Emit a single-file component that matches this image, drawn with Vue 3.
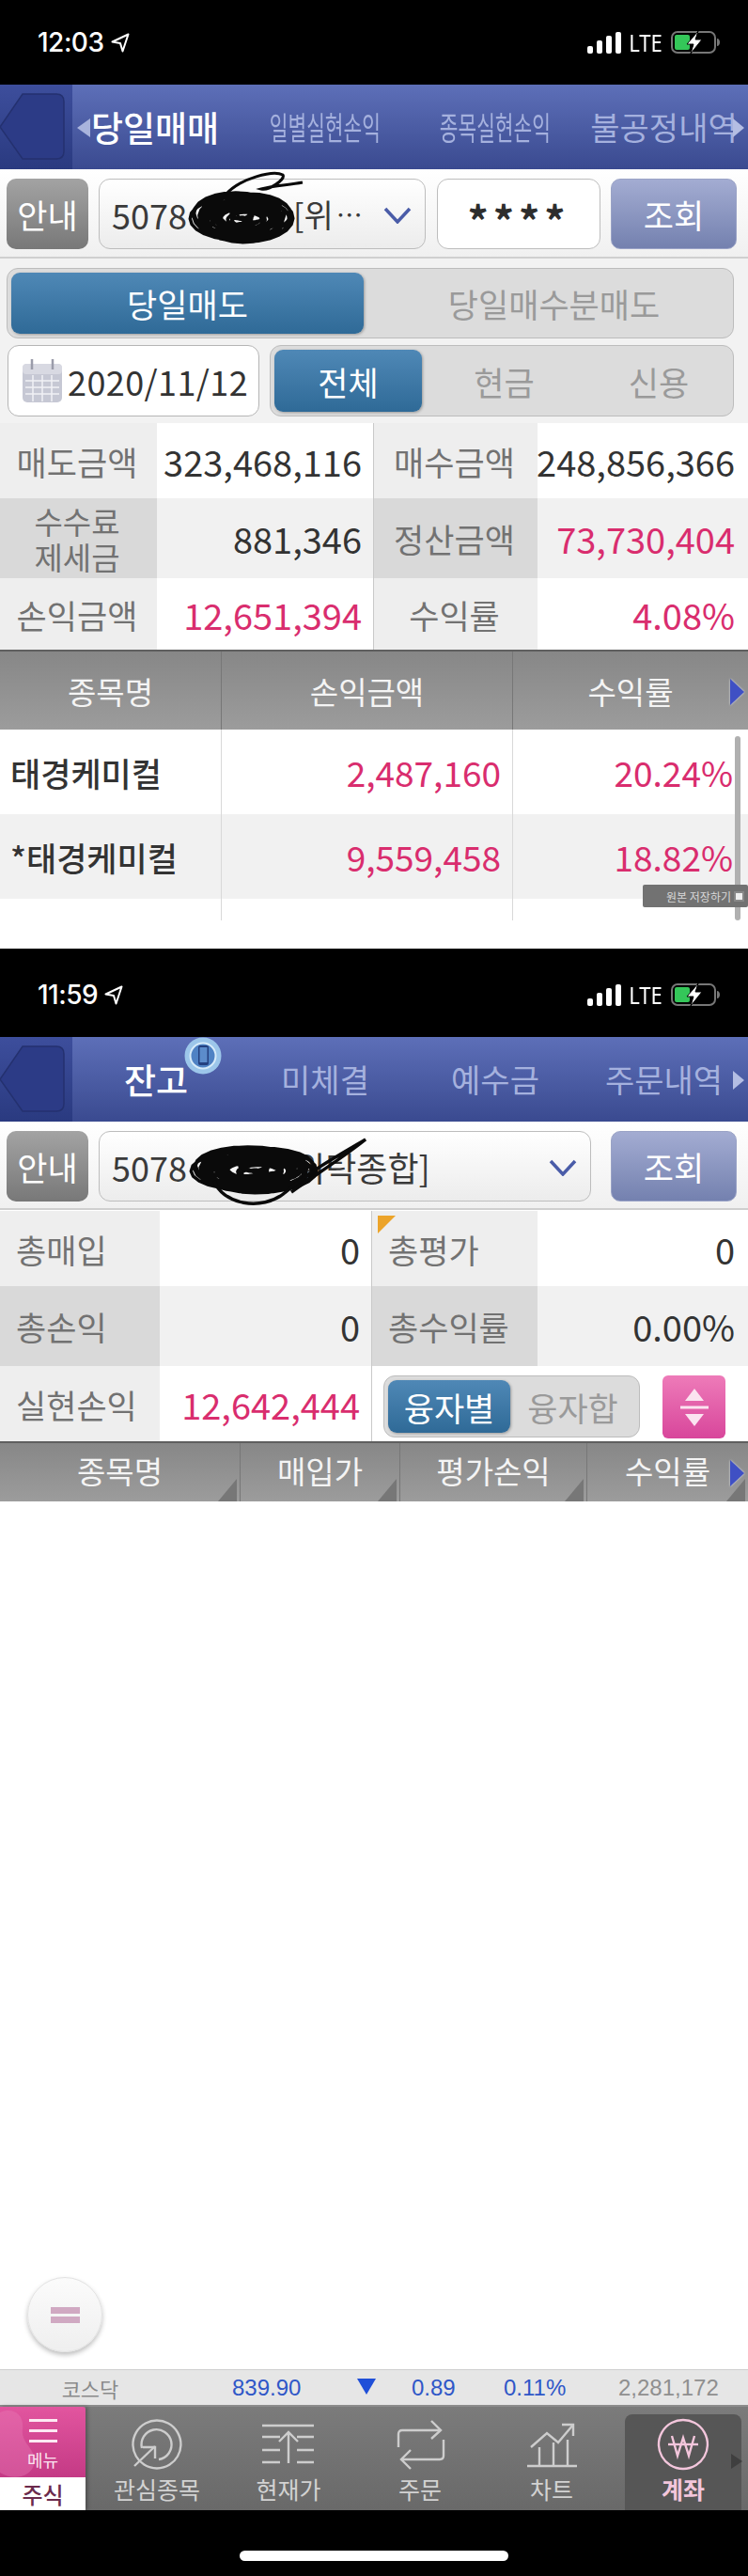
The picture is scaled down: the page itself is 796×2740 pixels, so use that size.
<template>
  <div class="page">
    <!-- first capture: 당일매매 -->
    <div class="status">
      <span class="time">12:03</span>
      <svg class="loc" width="20" height="21" viewBox="0 0 20 21"><path d="M18.5 1.5 1.5 9.5 10 11 12.5 19.5Z" fill="none" stroke="#fff" stroke-width="2" stroke-linejoin="round" /></svg>
      <div class="status-right">
        <div class="signal"><i class="b1"></i><i class="b2"></i><i class="b3"></i><i class="b4"></i></div>
        <span class="lte">LTE</span>
        <svg width="52" height="24" viewBox="0 0 52 24"><rect x="1" y="1" width="46" height="22" rx="6" fill="none" stroke="#777" stroke-width="2" /><rect x="4" y="4" width="16" height="16" rx="2" fill="#34c759" /><path d="M49 8v8c2 0 3-2 3-4s-1-4-3-4Z" fill="#777" /><path d="M29 0 17 14h7l-3 10 12-15h-7z" fill="#fff" stroke="#000" stroke-width="1" /></svg>
      </div>
    </div>

    <div class="head head-a">
      <div class="back">
        <svg width="70" height="72" viewBox="0 0 70 72"><path d="M24 1H60Q68 1 68 9V62Q68 70 60 70H24L0 36Z" fill="#2c3b86" stroke="#24316f" stroke-width="1.5" /></svg>
      </div>
      <span class="arrow-l"></span>
      <div v-for="t in tabsA" :key="t.label" class="tab">
        <span :class="['tab-text', { on: t.on, squeeze: t.squeeze }]">{{ t.label }}</span>
      </div>
      <span class="arrow-r"></span>
    </div>

    <div class="tools">
      <button class="btn guide">안내</button>
      <div class="select short">
        <span>5078</span><span class="hidden-no first"></span><span class="acct small">[위</span><span class="dots">…</span>
        <svg class="chev" width="30" height="18" viewBox="0 0 30 18"><path d="M2 2 15 16 28 2" fill="none" stroke="#4a5ca8" stroke-width="3.5" /></svg>
        <svg class="scribble" width="240" height="110" viewBox="0 0 240 110">
          <path :d="scribbleA" fill="none" stroke="#0a0a0a" stroke-width="3.5" stroke-linejoin="round" />
          <path d="M134 26C150 8 185 0 195 5 198 10 180 22 172 20 186 16 200 16 216 13" fill="none" stroke="#0a0a0a" stroke-width="3" />
        </svg>
      </div>
      <div class="pw">****</div>
      <button class="btn query">조회</button>
    </div>

    <div class="filters">
      <div class="seg seg-wide">
        <div class="seg-item on">당일매도</div>
        <div class="seg-item">당일매수분매도</div>
      </div>
      <div class="filter-row">
        <div class="date">
          <svg width="44" height="48" viewBox="0 0 44 48">
            <rect x="1" y="6" width="42" height="41" rx="5" fill="#c6c8d4" />
            <rect x="1" y="6" width="42" height="11" rx="4" fill="#d8d9e2" />
            <path d="M4 24H40M4 31H40M4 38H40M12 18V46M22 18V46M32 18V46" stroke="#f1f1f5" stroke-width="1.5" />
            <path d="M11 1V12M33 1V12" stroke="#9a9caa" stroke-width="2.5" />
          </svg>
          <span>2020/11/12</span>
        </div>
        <div class="seg seg-type">
          <div class="seg-item on">전체</div>
          <div class="seg-item">현금</div>
          <div class="seg-item">신용</div>
        </div>
      </div>
    </div>

    <div v-for="(r, i) in summaryA" :key="i" :class="['sum', 'sum-a', 'r' + i]">
      <div class="lab">
        <template v-if="r.l1 === '수수료 제세금'"><span class="two">수수료<br />제세금</span></template>
        <template v-else>{{ r.l1 }}</template>
      </div>
      <div :class="['val', { red: r.red1 }]">{{ r.v1 }}</div>
      <div class="lab split">{{ r.l2 }}</div>
      <div :class="['val', 'far', { red: r.red2 }]">{{ r.v2 }}</div>
    </div>

    <div class="grid-head cols-a">
      <div>종목명</div>
      <div>손익금액</div>
      <div>수익률</div>
      <span class="more"></span>
    </div>
    <div class="grid-body">
      <div v-for="(s, i) in stocks" :key="s.name" :class="['stock', 'cols-a', { alt: i === 1 }]">
        <div class="name">{{ s.name }}</div>
        <div class="num">{{ s.amount }}</div>
        <div class="num">{{ s.rate }}</div>
      </div>
      <div class="stock cols-a filler"><div></div><div></div><div></div></div>
      <div class="scroll"></div>
      <div class="save">원본 저장하기 <i></i></div>
    </div>
    <div class="gap"></div>

    <!-- second capture: 잔고 -->
    <div class="status second">
      <span class="time">11:59</span>
      <svg class="loc" width="20" height="21" viewBox="0 0 20 21"><path d="M18.5 1.5 1.5 9.5 10 11 12.5 19.5Z" fill="none" stroke="#fff" stroke-width="2" stroke-linejoin="round" /></svg>
      <div class="status-right">
        <div class="signal"><i class="b1"></i><i class="b2"></i><i class="b3"></i><i class="b4"></i></div>
        <span class="lte">LTE</span>
        <svg width="52" height="24" viewBox="0 0 52 24"><rect x="1" y="1" width="46" height="22" rx="6" fill="none" stroke="#777" stroke-width="2" /><rect x="4" y="4" width="16" height="16" rx="2" fill="#34c759" /><path d="M49 8v8c2 0 3-2 3-4s-1-4-3-4Z" fill="#777" /><path d="M29 0 17 14h7l-3 10 12-15h-7z" fill="#fff" stroke="#000" stroke-width="1" /></svg>
      </div>
    </div>

    <div class="head">
      <div class="back">
        <svg width="70" height="72" viewBox="0 0 70 72"><path d="M24 1H60Q68 1 68 9V62Q68 70 60 70H24L0 36Z" fill="#2c3b86" stroke="#24316f" stroke-width="1.5" /></svg>
      </div>
      <div v-for="t in tabsB" :key="t.label" class="tab">
        <span :class="['tab-text', { on: t.on }]">{{ t.label }}</span>
      </div>
      <span class="arrow-r small"></span>
      <svg class="badge" width="40" height="40" viewBox="0 0 40 40">
        <circle cx="20" cy="20" r="19.5" fill="#9cc6ea" />
        <circle cx="20" cy="20" r="13.5" fill="#4f82c4" stroke="#d7ebf9" stroke-width="2" />
        <rect x="15" y="9" width="11" height="21" rx="2" fill="#24407f" />
        <rect x="16.5" y="11" width="8" height="16" fill="#5c8ccb" />
      </svg>
    </div>

    <div class="tools tall">
      <button class="btn guide">안내</button>
      <div class="select long">
        <span>5078</span><span class="hidden-no"></span><span class="acct">[위탁종합]</span>
        <svg class="chev" width="30" height="18" viewBox="0 0 30 18"><path d="M2 2 15 16 28 2" fill="none" stroke="#4a5ca8" stroke-width="3.5" /></svg>
        <svg class="scribble" width="300" height="110" viewBox="0 0 300 110">
          <path :d="scribbleB" fill="none" stroke="#0a0a0a" stroke-width="3.5" stroke-linejoin="round" />
          <path d="M122 62C130 86 172 96 198 74 226 50 256 34 283 18 258 38 226 58 204 74" fill="none" stroke="#0a0a0a" stroke-width="3.5" />
        </svg>
      </div>
      <button class="btn query">조회</button>
    </div>

    <div v-for="(r, i) in summaryB" :key="'b' + i" :class="['sum', 'sum-b', 'r' + i]">
      <div class="lab left">{{ r.l1 }}</div>
      <div :class="['val', { red: r.red1 }]">{{ r.v1 }}</div>
      <template v-if="r.l2">
        <div class="lab left split">{{ r.l2 }}<span v-if="i === 0" class="flag"></span></div>
        <div class="val far">{{ r.v2 }}</div>
      </template>
      <div v-else class="controls split">
        <div class="seg seg-loan">
          <div class="seg-item on">융자별</div>
          <div class="seg-item">융자합</div>
        </div>
        <div class="pink">
          <svg width="30" height="42" viewBox="0 0 30 42"><path d="M15 1 25 14H5ZM15 41 5 28H25Z" fill="#fbe3f0" /><rect x="0" y="19.5" width="30" height="3" fill="#fbe3f0" /></svg>
        </div>
      </div>
    </div>

    <div class="grid-head cols-b">
      <div v-for="h in headB" :key="h" class="sortable">{{ h }}</div>
      <span class="more"></span>
    </div>

    <div class="empty">
      <div class="fab"><i></i><i></i></div>
    </div>

    <div class="ticker">
      <span class="t-name">코스닥</span>
      <span class="t-price">839.90</span>
      <span class="t-down"></span>
      <span class="t-diff">0.89</span>
      <span class="t-rate">0.11%</span>
      <span class="t-vol">2,281,172</span>
    </div>

    <div class="nav">
      <div class="menu">
        <div class="menu-top">
          <svg class="blob" width="91" height="77" viewBox="0 0 91 77"><path d="M0 6C14 0 26 8 24 24 22 40 40 44 36 62 32 76 12 78 0 70Z" fill="#e87ab6" opacity=".4" /></svg>
          <div class="burger"><i></i><i></i><i></i></div>
          <span>메뉴</span>
        </div>
        <div class="menu-sub">주식</div>
      </div>
      <div class="nav-items">
        <div v-for="item in navItems" :key="item.label" :class="['nav-item', { active: item.active }]">
          <svg width="60" height="60" viewBox="0 0 60 60" fill="none" :stroke="item.active ? '#f3c6dc' : '#cdcdcd'" stroke-width="2.4">
            <path v-for="d in item.paths" :key="d" :d="d" />
          </svg>
          <span>{{ item.label }}</span>
        </div>
      </div>
      <span class="nav-more"></span>
    </div>

    <div class="home"><i></i></div>
  </div>
</template>

<script setup>
const tabsA = [
  { label: '당일매매', on: true },
  { label: '일별실현손익', squeeze: true },
  { label: '종목실현손익', squeeze: true },
  { label: '불공정내역' }
]

const tabsB = [
  { label: '잔고', on: true },
  { label: '미체결' },
  { label: '예수금' },
  { label: '주문내역' }
]

const summaryA = [
  { l1: '매도금액', v1: '323,468,116', l2: '매수금액', v2: '248,856,366' },
  { l1: '수수료 제세금', v1: '881,346', l2: '정산금액', v2: '73,730,404', red2: true },
  { l1: '손익금액', v1: '12,651,394', red1: true, l2: '수익률', v2: '4.08%', red2: true }
]

const summaryB = [
  { l1: '총매입', v1: '0', l2: '총평가', v2: '0' },
  { l1: '총손익', v1: '0', l2: '총수익률', v2: '0.00%' },
  { l1: '실현손익', v1: '12,642,444', red1: true }
]

const stocks = [
  { name: '태경케미컬', amount: '2,487,160', rate: '20.24%' },
  { name: '*태경케미컬', amount: '9,559,458', rate: '18.82%' }
]

const headB = ['종목명', '매입가', '평가손익', '수익률']

const navItems = [
  {
    label: '관심종목',
    paths: [
      'M30 4.5A25.5 25.5 0 1 1 29.9 4.5Z',
      'M14 34A16 16 0 1 1 32 46',
      'M6 53 28 32',
      'M15 33H28V45'
    ]
  },
  {
    label: '현재가',
    paths: [
      'M2 10H57',
      'M2 22H21M2 36H21M2 49H21',
      'M39 22H57M39 36H57M39 49H57',
      'M30 50V17M20 27 30 17 40 27'
    ]
  },
  {
    label: '주문',
    paths: [
      'M7 33V19Q7 15 11 15H52',
      'M42 5 52 15 42 24',
      'M55 25V42Q55 46 51 46H10',
      'M20 36 10 46 20 56'
    ]
  },
  {
    label: '차트',
    paths: [
      'M4 53H57',
      'M17 53V33M32 53V28M47 53V25',
      'M8 33 25 18 37 28 53 9',
      'M41 9H53V21'
    ]
  },
  {
    label: '계좌',
    active: true,
    paths: [
      'M30 4A26 26 0 1 1 29.9 4Z',
      'M18 21 24 42 30 23 36 42 42 21',
      'M14 30H46'
    ]
  }
]

// the hand-drawn blot over the account number
function makeScribble(cx, cy, rx, ry, turns) {
  let d = ''
  for (let i = 0; i <= turns * 24; i++) {
    const a = (i / 24) * Math.PI * 2
    const k = 0.12 + 0.88 * Math.abs(Math.sin(i * 0.023))
    const dx = Math.sin(i * 0.11) * 7
    const dy = Math.cos(i * 0.07) * 4
    const x = cx + Math.cos(a) * rx * k + dx
    const y = cy + Math.sin(a) * ry * k + dy
    d += (i ? 'L' : 'M') + x.toFixed(1) + ' ' + y.toFixed(1)
  }
  return d
}

const scribbleA = makeScribble(151, 50, 48, 24, 30)
const scribbleB = makeScribble(164, 50, 60, 22, 30)
</script>

<style>
html, body {
  margin: 0;
  background: #fff;
}
</style>

<style scoped>
* {
  box-sizing: border-box;
}

.page {
  width: 796px;
  height: 2740px;
  display: flex;
  flex-direction: column;
  overflow: hidden;
  background: #fff;
  font-family: "Noto Sans CJK KR", "Noto Sans", sans-serif;
  color: #333;
}

.status {
  height: 90px;
  flex: none;
  background: #000;
  color: #fff;
  display: flex;
  align-items: center;
  padding: 0 30px 0 40px;
}

.status.second {
  height: 94px;
  padding-top: 4px;
}

.time {
  font-family: Inter, "Noto Sans", sans-serif;
  font-size: 28px;
  font-weight: 500;
  letter-spacing: -0.5px;
}

.loc {
  margin-left: 7px;
}

.status-right {
  margin-left: auto;
  display: flex;
  align-items: center;
}

.signal {
  display: flex;
  align-items: flex-end;
  gap: 4px;
  height: 23px;
}

.signal i {
  width: 6px;
  background: #fff;
  border-radius: 2px;
}

.signal .b1 { height: 8px; }
.signal .b2 { height: 14px; }
.signal .b3 { height: 19px; }
.signal .b4 { height: 23px; }

.lte {
  font-family: "Noto Sans", sans-serif;
  font-size: 26px;
  margin: 0 6px 0 5px;
  transform: scaleX(0.85);
  line-height: 1;
}

.head {
  position: relative;
  height: 90px;
  flex: none;
  display: grid;
  grid-template-columns: 178px 182px 180px 179px;
  padding-left: 77px;
  align-items: center;
  background: linear-gradient(#5d6fb8, #3a4a90);
}

.back {
  position: absolute;
  left: 0;
  top: 0;
  width: 77px;
  height: 90px;
  padding-top: 9px;
  background: linear-gradient(#3d4e9c, #2a3a80);
}

.tab {
  display: flex;
  justify-content: center;
  white-space: nowrap;
}

.tab-text {
  display: inline-block;
  flex: none;
  font-size: 34px;
  line-height: 44px;
  color: #a5b1de;
}

.tab-text.on {
  font-size: 37px;
  font-weight: 500;
  color: #fff;
}

.head-a .tab-text.on {
  margin-right: 2px;
}

.tab-text.squeeze {
  transform: scaleX(0.63);
}

.arrow-l {
  position: absolute;
  left: 82px;
  top: 36px;
  border: 10px solid transparent;
  border-left: 0;
  border-right: 14px solid #a9b4dd;
}

.arrow-r {
  position: absolute;
  left: 780px;
  top: 36px;
  border: 10px solid transparent;
  border-right: 0;
  border-left: 12px solid #b4bee3;
}

.badge {
  position: absolute;
  left: 196px;
  top: 0;
}

.tools {
  height: 95px;
  flex: none;
  display: flex;
  align-items: flex-start;
  padding: 10px 12px 0 7px;
  background: linear-gradient(#fff, #f0f0f0);
  border-bottom: 2px solid #cfcfcf;
}

.tools.tall {
  height: 94px;
}

.btn {
  height: 75px;
  border: 0;
  border-radius: 10px;
  padding: 0;
  font-family: inherit;
  font-size: 35px;
  color: #fff;
}

.guide {
  width: 87px;
  background: linear-gradient(#a3a3a3, #787878);
}

.query {
  width: 134px;
  margin-left: auto;
  background: linear-gradient(#a3acd2, #7481af);
  border: 1px solid #9aa3c6;
}

.select {
  position: relative;
  height: 75px;
  margin-left: 11px;
  display: flex;
  align-items: center;
  padding-left: 13px;
  border: 1px solid #bdbdbd;
  border-radius: 12px;
  background: linear-gradient(#fff, #ececec);
  font-size: 36px;
  color: #3a3a3a;
}

.select.short {
  width: 348px;
}

.select.long {
  width: 524px;
}

.hidden-no {
  width: 102px;
}

.hidden-no.first {
  width: 113px;
}

.acct {
  font-size: 36px;
}

.acct.small {
  font-size: 34px;
}

.dots {
  font-size: 28px;
  margin-left: 3px;
}

.chev {
  position: absolute;
  right: 14px;
  top: 29px;
}

.scribble {
  position: absolute;
  left: 0;
  top: -10px;
  overflow: visible;
}

.pw {
  width: 174px;
  height: 75px;
  margin-left: 12px;
  border: 1px solid #bdbdbd;
  border-radius: 12px;
  background: #fff;
  text-align: center;
  font-size: 44px;
  font-weight: 700;
  line-height: 84px;
  letter-spacing: 5px;
  color: #2d2d2d;
}

.filters {
  height: 175px;
  flex: none;
  padding: 10px 15px 0 7px;
  background: #f2f2f2;
}

.seg {
  display: grid;
  padding: 4px;
  background: #dcdcdc;
  border: 1px solid #bcbcbc;
  border-radius: 12px;
}

.seg-item {
  display: flex;
  align-items: center;
  justify-content: center;
  font-size: 35px;
  color: #9a9a9a;
  border-radius: 9px;
}

.seg-item.on {
  color: #fff;
  background: linear-gradient(#4f88b6, #2f6a97);
  box-shadow: 1px 1px 3px rgba(0, 0, 0, 0.3);
}

.seg-wide {
  height: 75px;
  grid-template-columns: 375px 1fr;
}

.seg-wide .seg-item:last-child {
  padding-left: 16px;
}

.filter-row {
  display: flex;
  margin-top: 7px;
  gap: 11px;
}

.date {
  width: 269px;
  height: 76px;
  margin-left: 1px;
  display: flex;
  align-items: center;
  gap: 5px;
  padding-left: 14px;
  background: #fff;
  border: 1px solid #b5b5b5;
  border-radius: 12px;
  font-size: 36px;
  letter-spacing: 0.4px;
  color: #333;
}

.seg-type {
  width: 494px;
  height: 76px;
  grid-template-columns: 157px 175px 154px;
}

.sum {
  display: grid;
  flex: none;
  background: #fff;
}

.sum-a {
  grid-template-columns: 167px 230px 175px 224px;
}

.sum-a.r0 { height: 80px; }
.sum-a.r1 { height: 85px; }
.sum-a.r2 { height: 76px; }

.sum-b {
  grid-template-columns: 170px 225px 177px 224px;
}

.sum-b.r0 { height: 80px; margin-top: 1px; }
.sum-b.r1 { height: 85px; }
.sum-b.r2 { height: 80px; }

.lab {
  display: flex;
  align-items: center;
  justify-content: center;
  padding-right: 3px;
  background: #eee;
  font-size: 35px;
  color: #727272;
  white-space: nowrap;
}

.lab.left {
  justify-content: flex-start;
  padding-left: 17px;
}

.split {
  border-left: 1px solid #c9c9c9;
}

.two {
  display: block;
  text-align: center;
  font-size: 33px;
  line-height: 38px;
}

.val {
  display: flex;
  align-items: center;
  justify-content: flex-end;
  padding-right: 12px;
  font-size: 38px;
  color: #333;
  white-space: nowrap;
}

.val.far {
  padding-right: 14px;
}

.val.red {
  color: #d92d6e;
}

.r1 .lab {
  background: #d9d9d9;
}

.r1 .val {
  background: #f1f1f1;
}

.flag {
  position: absolute;
  left: 402px;
  top: 1293px;
  width: 0;
  height: 0;
  border-top: 19px solid #eca42a;
  border-right: 19px solid transparent;
}

.controls {
  grid-column: span 2;
  display: flex;
  align-items: flex-start;
  padding: 10px 0 0 12px;
}

.seg-loan {
  width: 273px;
  height: 66px;
  grid-template-columns: 130px 1fr;
}

.pink {
  width: 67px;
  height: 67px;
  margin-left: 24px;
  border-radius: 6px;
  display: flex;
  align-items: center;
  justify-content: center;
  background: linear-gradient(#ee7bb9, #d8469b);
}

.grid-head {
  position: relative;
  flex: none;
  display: grid;
  background: linear-gradient(#878787, #9c9c9c);
  border-top: 2px solid #5f5f5f;
  color: #f4f4f4;
  font-size: 33px;
}

.grid-head > div {
  position: relative;
  display: flex;
  align-items: center;
  justify-content: center;
  border-left: 1px solid #777;
}

.grid-head > div:first-child {
  border-left: 0;
}

.cols-a {
  grid-template-columns: 235px 310px 251px;
}

.grid-head.cols-a {
  height: 85px;
}

.cols-b {
  grid-template-columns: 255px 170px 199px 172px;
}

.grid-head.cols-b {
  height: 64px;
}

.sortable::after {
  content: "";
  position: absolute;
  right: 3px;
  bottom: 0;
  border-bottom: 24px solid #777;
  border-left: 20px solid transparent;
}

.cols-b > .sortable {
  padding-bottom: 4px;
}

.more {
  position: absolute;
  left: 777px;
  top: 29px;
  border: 14px solid transparent;
  border-right: 0;
  border-left: 15px solid #3f50c4;
  filter: drop-shadow(0 0 1px #dfe3f5);
}

.cols-b .more {
  top: 18px;
}

.grid-body {
  position: relative;
  flex: none;
}

.stock {
  display: grid;
  height: 90px;
}

.stock > div {
  display: flex;
  align-items: center;
  border-left: 1px solid #d9d9d9;
}

.stock > div:first-child {
  border-left: 0;
}

.stock.alt {
  background: #f1f1f1;
}

.stock.filler {
  height: 23px;
}

.name {
  padding-left: 11px;
  font-size: 35px;
  font-weight: 500;
  color: #333;
  white-space: nowrap;
}

.num {
  justify-content: flex-end;
  padding-right: 12px;
  font-size: 37px;
  color: #d92d6e;
}

.stock > .num:last-child {
  padding-right: 16px;
}

.scroll {
  position: absolute;
  left: 782px;
  top: 7px;
  width: 6px;
  height: 196px;
  border-radius: 3px;
  background: #b0b0b0;
}

.save {
  position: absolute;
  right: 0;
  top: 165px;
  width: 112px;
  height: 24px;
  display: flex;
  align-items: center;
  justify-content: flex-end;
  gap: 3px;
  padding-right: 4px;
  border-radius: 2px;
  background: #727272;
  color: #d8d8d8;
  font-size: 12px;
  white-space: nowrap;
}

.save i {
  width: 11px;
  height: 11px;
  background: #eee;
  border: 2px solid #888;
}

.gap {
  height: 30px;
  flex: none;
}

.empty {
  position: relative;
  flex: 1;
}

.fab {
  position: absolute;
  left: 29px;
  bottom: 18px;
  width: 80px;
  height: 80px;
  border-radius: 50%;
  display: flex;
  flex-direction: column;
  align-items: center;
  justify-content: center;
  gap: 3px;
  background: linear-gradient(#fbfbfb, #efefef);
  border: 1px solid #e2e2e2;
  box-shadow: 0 3px 5px rgba(0, 0, 0, 0.25);
}

.fab i {
  width: 31px;
  height: 7px;
  background: #d0a9c2;
}

.ticker {
  position: relative;
  height: 40px;
  flex: none;
  background: #e6e6e6;
  border-top: 1px solid #cfcfcf;
  border-bottom: 2px solid #8c8c8c;
  font-family: "Liberation Sans", sans-serif;
  font-size: 24px;
  color: #2f57c8;
  display: grid;
  grid-template-columns: 247px 133px 58px 98px 122px 138px;
  align-items: center;
  white-space: nowrap;
}

.t-name {
  text-align: center;
  padding-right: 55px;
  font-family: "Noto Sans CJK KR", sans-serif;
  font-size: 22px;
  color: #8a8a8a;
}

.t-down {
  width: 0;
  height: 0;
  border-top: 17px solid #1f4fd8;
  border-left: 10px solid transparent;
  border-right: 10px solid transparent;
  margin-bottom: 3px;
}

.t-vol {
  color: #8f8f8f;
}

.nav {
  position: relative;
  height: 110px;
  flex: none;
  display: flex;
  background: linear-gradient(#7b7b7b, #696969);
}

.menu {
  width: 91px;
  flex: none;
  display: flex;
  flex-direction: column;
  box-shadow: 2px 0 4px rgba(0, 0, 0, 0.3);
}

.menu-top {
  position: relative;
  height: 77px;
  display: flex;
  flex-direction: column;
  align-items: center;
  padding-top: 13px;
  background: linear-gradient(#e2559f, #c43a85);
  border-top-right-radius: 3px;
  color: #fbe3f0;
  font-size: 18px;
  line-height: 24px;
}

.blob {
  position: absolute;
  left: 0;
  top: 0;
}

.burger {
  position: relative;
  width: 30px;
  display: flex;
  flex-direction: column;
  gap: 8px;
  margin-bottom: 6px;
}

.burger i {
  height: 3px;
  background: #fde9f3;
}

.menu-top span {
  position: relative;
}

.menu-sub {
  flex: 1;
  display: flex;
  align-items: center;
  justify-content: center;
  background: #fff;
  color: #6b2a4c;
  font-size: 24px;
  font-weight: 500;
}

.nav-items {
  display: grid;
  grid-template-columns: repeat(5, 140px);
  padding-left: 6px;
}

.nav-item {
  display: flex;
  flex-direction: column;
  align-items: center;
  padding-top: 10px;
  font-size: 25px;
  line-height: 34px;
  color: #d2d2d2;
  white-space: nowrap;
}

.nav-item.active {
  margin: 8px 8px 0;
  padding-top: 2px;
  border-radius: 8px 8px 0 0;
  background: #565656;
  color: #f3c6dc;
  font-weight: 700;
}

.nav-more {
  position: absolute;
  left: 778px;
  top: 50px;
  border: 8px solid transparent;
  border-right: 0;
  border-left: 12px solid #3f3f3f;
}

.home {
  height: 70px;
  flex: none;
  background: #000;
  display: flex;
  justify-content: center;
  padding-top: 43px;
}

.home i {
  width: 286px;
  height: 11px;
  border-radius: 6px;
  background: #fff;
}
</style>
